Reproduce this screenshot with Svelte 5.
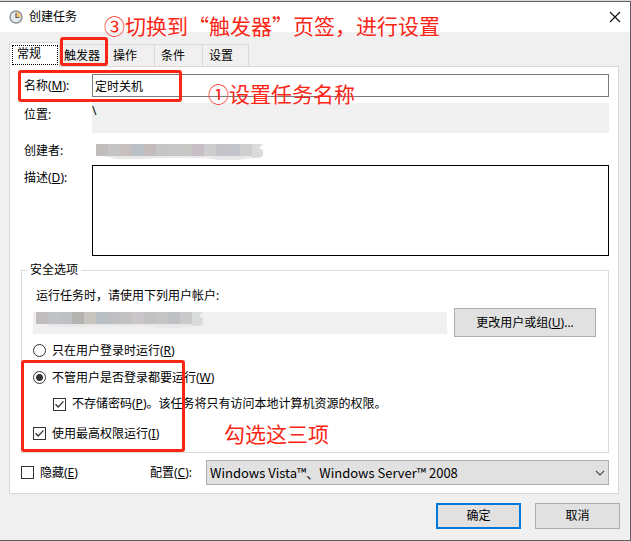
<script lang="ts">
  let activeTab = $state('常规');
  let name = $state('定时关机');
  let description = $state('');
  let runMode = $state('always');
  let skipPassword = $state(true);
  let highest = $state(true);
  let hidden = $state(false);

  const tabs = ['常规', '触发器', '操作', '条件', '设置'];

  // Mosaic tiles covering the account name
  const authorTiles = ['#c1bdbd', '#c4c4c4', '#c5c0bd', '#b9c1c6', '#c2bcbd', '#c6c6c6', '#c7c7c8', '#c8c8c7', '#c8bfc6', '#cdcdcd', '#c4c4c8', '#c4c5ca', '#cfcfd0'];
  const accountTiles = ['#c1bcbd', '#c1c2c5', '#bfc0c4', '#b3b3b2', '#c8c4bf', '#b9c0c4', '#bfbfc1', '#c2c2c2', '#cac5c8', '#c1c1c1', '#c5c5c5', '#bfc0c4', '#cacaca'];
</script>

{#snippet mosaic(tiles: string[])}
  <svg class="mosaic" width="172" height="20" viewBox="0 0 172 20" aria-hidden="true">
    <path d="M4 14H156V17L140 19H124L108 17H60L44 18H20Z" fill="#e8e8e8" />
    <path d="M156 3H167L163 7L167 9V15L163 17H156Z" fill="#dadbdc" />
    {#each tiles as fill, i}
      <rect x={i * 12} y="3" width="12" height="12" {fill} />
    {/each}
  </svg>
{/snippet}

<div class="window">
  <header class="titlebar">
    <svg class="clock" width="14" height="14" viewBox="0 0 14 14" aria-hidden="true">
      <circle cx="7" cy="7" r="6" fill="#e3e9ed" stroke="#8d9195" stroke-width="1.4" />
      <path d="M7 7V2A5 5 0 0 1 12 7Z" fill="#f4c778" />
      <path d="M7 3V7.5H10.5" fill="none" stroke="#58636c" stroke-width="1.2" />
    </svg>
    <span class="title">创建任务</span>
    <button class="close" aria-label="关闭">
      <svg width="12" height="12" viewBox="0 0 12 12">
        <path d="M1 1L11 11M11 1L1 11" stroke="#111" stroke-width="1.2" />
      </svg>
    </button>
  </header>

  <div class="tabs" role="tablist">
    {#each tabs as tab}
      <button
        class="tab"
        class:active={tab === activeTab}
        role="tab"
        aria-selected={tab === activeTab}
        onclick={() => (activeTab = tab)}
      ><span>{tab}</span></button>
    {/each}
  </div>

  <main class="panel">
    <div class="row">
      <label for="name">名称(<u>M</u>):</label>
      <input id="name" class="text" type="text" bind:value={name} />
    </div>
    <div class="row location">
      <span class="caption">位置:</span>
      <div class="path">\</div>
    </div>
    <div class="row author">
      <span class="caption">创建者:</span>
      {@render mosaic(authorTiles)}
    </div>
    <div class="row description">
      <label for="description">描述(<u>D</u>):</label>
      <textarea id="description" bind:value={description}></textarea>
    </div>

    <fieldset>
      <legend>安全选项</legend>
      <p>运行任务时，请使用下列用户帐户:</p>
      <div class="account">
        <div class="user">{@render mosaic(accountTiles)}</div>
        <button class="push change">更改用户或组(<u>U</u>)...</button>
      </div>
      <label class="option">
        <input type="radio" name="run" value="logged-on" bind:group={runMode} />
        <span>只在用户登录时运行(<u>R</u>)</span>
      </label>
      <label class="option">
        <input type="radio" name="run" value="always" bind:group={runMode} />
        <span>不管用户是否登录都要运行(<u>W</u>)</span>
      </label>
      <label class="option nested">
        <input type="checkbox" bind:checked={skipPassword} />
        <span>不存储密码(<u>P</u>)。该任务将只有访问本地计算机资源的权限。</span>
      </label>
      <label class="option highest">
        <input type="checkbox" bind:checked={highest} />
        <span>使用最高权限运行(<u>I</u>)</span>
      </label>
    </fieldset>

    <div class="bottom">
      <label class="hide">
        <input type="checkbox" bind:checked={hidden} />
        <span>隐藏(<u>E</u>)</span>
      </label>
      <label class="config" for="config">配置(<u>C</u>):</label>
      <select id="config">
        <option>Windows Vista™、Windows Server™ 2008</option>
      </select>
    </div>
  </main>

  <footer>
    <button class="push ok">确定</button>
    <button class="push">取消</button>
  </footer>

  <div class="mark mark-tab"></div>
  <div class="mark mark-name"></div>
  <div class="mark mark-options"></div>
  <div class="note note-tab">③切换到“触发器”页签，进行设置</div>
  <div class="note note-name">①设置任务名称</div>
  <div class="note note-options">勾选这三项</div>
</div>

<style>
  :global(body) {
    margin: 0;
  }
  .window,
  .window :is(button, input, textarea, select) {
    color: #000;
    font-family: "Noto Sans", "Noto Sans CJK SC", sans-serif;
    font-size: 12px;
    line-height: 16px;
  }
  .window :is(button, input, textarea, select) {
    border-radius: 0;
    box-sizing: border-box;
    margin: 0;
  }
  .window {
    background: #f0f0f0;
    border: 1px solid #5f5f5f;
    border-left: 0;
    box-shadow: 0 -1px #dadada;
    margin-top: 1px;
    position: relative;
  }
  .titlebar {
    align-items: center;
    background: #fff;
    display: flex;
    height: 30px;
    padding: 0 9px;
  }
  .title {
    flex: 1;
    padding-left: 6px;
  }
  .close {
    background: none;
    border: 0;
    display: flex;
    padding: 0;
  }
  .tabs {
    align-items: flex-end;
    display: flex;
    height: 24px;
    padding: 10px 0 0 9px;
  }
  .tab {
    background: #f0f0f0;
    border: 1px solid #d9d9d9;
    border-bottom: 0;
    border-left: 0;
    height: 22px;
    padding: 0 17px 0 6px;
  }
  .tab:nth-child(2) {
    padding: 0 6px 0 4px;
  }
  .tab:last-child {
    padding-right: 15px;
  }
  .tab.active {
    background: #fff;
    border-left: 1px solid #d9d9d9;
    height: 25px;
    margin-bottom: -1px;
    padding: 2px 1px 2px 2px;
    z-index: 1;
  }
  .tab.active span {
    border: 1px dotted #000;
    display: block;
    height: 18px;
    line-height: 16px;
    padding: 0 16px 0 4px;
  }
  .panel {
    background: #fff;
    border: 1px solid #d9d9d9;
    margin: 0 11px 0 9px;
    padding: 7px 9px 8px 11px;
  }
  .row {
    display: flex;
    padding-left: 3px;
  }
  .row > :first-child {
    flex: 0 0 68px;
    padding-top: 4px;
  }
  .text {
    border: 1px solid #7a7a7a;
    flex: 1;
    height: 23px;
    padding: 0 2px;
  }
  .location {
    margin-top: 6px;
  }
  .path {
    background: #f0f0f0;
    flex: 1;
    height: 30px;
  }
  .author {
    height: 32px;
  }
  .author > :first-child {
    padding-top: 10px;
  }
  .author .mosaic {
    margin: 8px 0 0 4px;
  }
  .description > :first-child {
    padding-top: 5px;
  }
  textarea {
    border: 1px solid #000;
    flex: 1;
    height: 91px;
    resize: none;
  }
  fieldset {
    border: 1px solid #dcdcdc;
    margin: 6px 0 0;
    min-width: 0;
    padding: 10px 12px 5px 11px;
  }
  legend {
    margin-left: -6px;
    padding: 0 3px;
  }
  p {
    margin: 0 0 4px 3px;
  }
  .account {
    align-items: center;
    display: flex;
    gap: 7px;
  }
  .user {
    background: #f0f0f0;
    flex: 1;
    height: 22px;
    padding-left: 3px;
  }
  .mosaic {
    display: block;
  }
  .user .mosaic {
    margin-top: -3px;
  }
  .push {
    background: #e1e1e1;
    border: 1px solid #adadad;
    height: 26px;
    padding: 0;
    width: 85px;
  }
  .change {
    height: 29px;
    width: 142px;
  }
  .ok {
    border: 2px solid #0078d7;
  }
  .option,
  .hide {
    align-items: center;
    display: flex;
    gap: 6px;
  }
  .option {
    height: 27px;
  }
  .nested {
    height: 26px;
    padding-left: 20px;
  }
  .highest {
    margin-top: 3px;
  }
  input[type="radio"],
  input[type="checkbox"] {
    appearance: none;
    background: #fff;
    border: 1px solid #333;
    flex: none;
    height: 13px;
    width: 13px;
  }
  .window input[type="radio"] {
    border-radius: 50%;
  }
  input[type="radio"]:checked {
    background: radial-gradient(circle, #333 3px, #fff 4px);
  }
  input[type="checkbox"]:checked {
    background: url("data:image/svg+xml,%3Csvg xmlns='http://www.w3.org/2000/svg' viewBox='0 0 11 11'%3E%3Cpath d='M1.5 5.2L4.2 8L9.5 2.4' fill='none' stroke='%23333' stroke-width='1.3'/%3E%3C/svg%3E");
  }
  .bottom {
    align-items: center;
    display: flex;
    margin-top: 7px;
  }
  .hide {
    width: 129px;
  }
  .config {
    width: 56px;
  }
  .window select {
    appearance: none;
    background: #e1e1e1 url("data:image/svg+xml,%3Csvg xmlns='http://www.w3.org/2000/svg' width='10' height='6'%3E%3Cpath d='M1 .8L5 4.8L9 .8' fill='none' stroke='%23444' stroke-width='1.2'/%3E%3C/svg%3E") no-repeat right 3px center;
    border: 1px solid #adadad;
    flex: 1;
    font-family: "Noto Sans CJK SC", sans-serif;
    font-size: 13px;
    height: 25px;
    min-width: 0;
    padding: 0 3px;
  }
  footer {
    display: flex;
    gap: 14px;
    justify-content: flex-end;
    padding: 9px 10px 11px;
  }

  /* Tutorial annotations drawn over the dialog */
  .mark,
  .note {
    pointer-events: none;
    position: absolute;
    z-index: 2;
  }
  .mark {
    border: 3px solid #fb2516;
    border-radius: 3px;
    box-sizing: border-box;
  }
  .mark-tab {
    height: 29px;
    left: 60px;
    top: 35px;
    width: 48px;
  }
  .mark-name {
    height: 32px;
    left: 18px;
    top: 68px;
    width: 164px;
  }
  .mark-options {
    height: 92px;
    left: 21px;
    top: 358px;
    width: 164px;
  }
  .note {
    color: #fb2516;
    font-family: "Noto Sans CJK SC", sans-serif;
    font-size: 21px;
    line-height: 28px;
    white-space: nowrap;
  }
  .note-tab {
    left: 104px;
    top: 9px;
  }
  .note-name {
    left: 208px;
    top: 77px;
  }
  .note-options {
    left: 224px;
    top: 417px;
  }
</style>
